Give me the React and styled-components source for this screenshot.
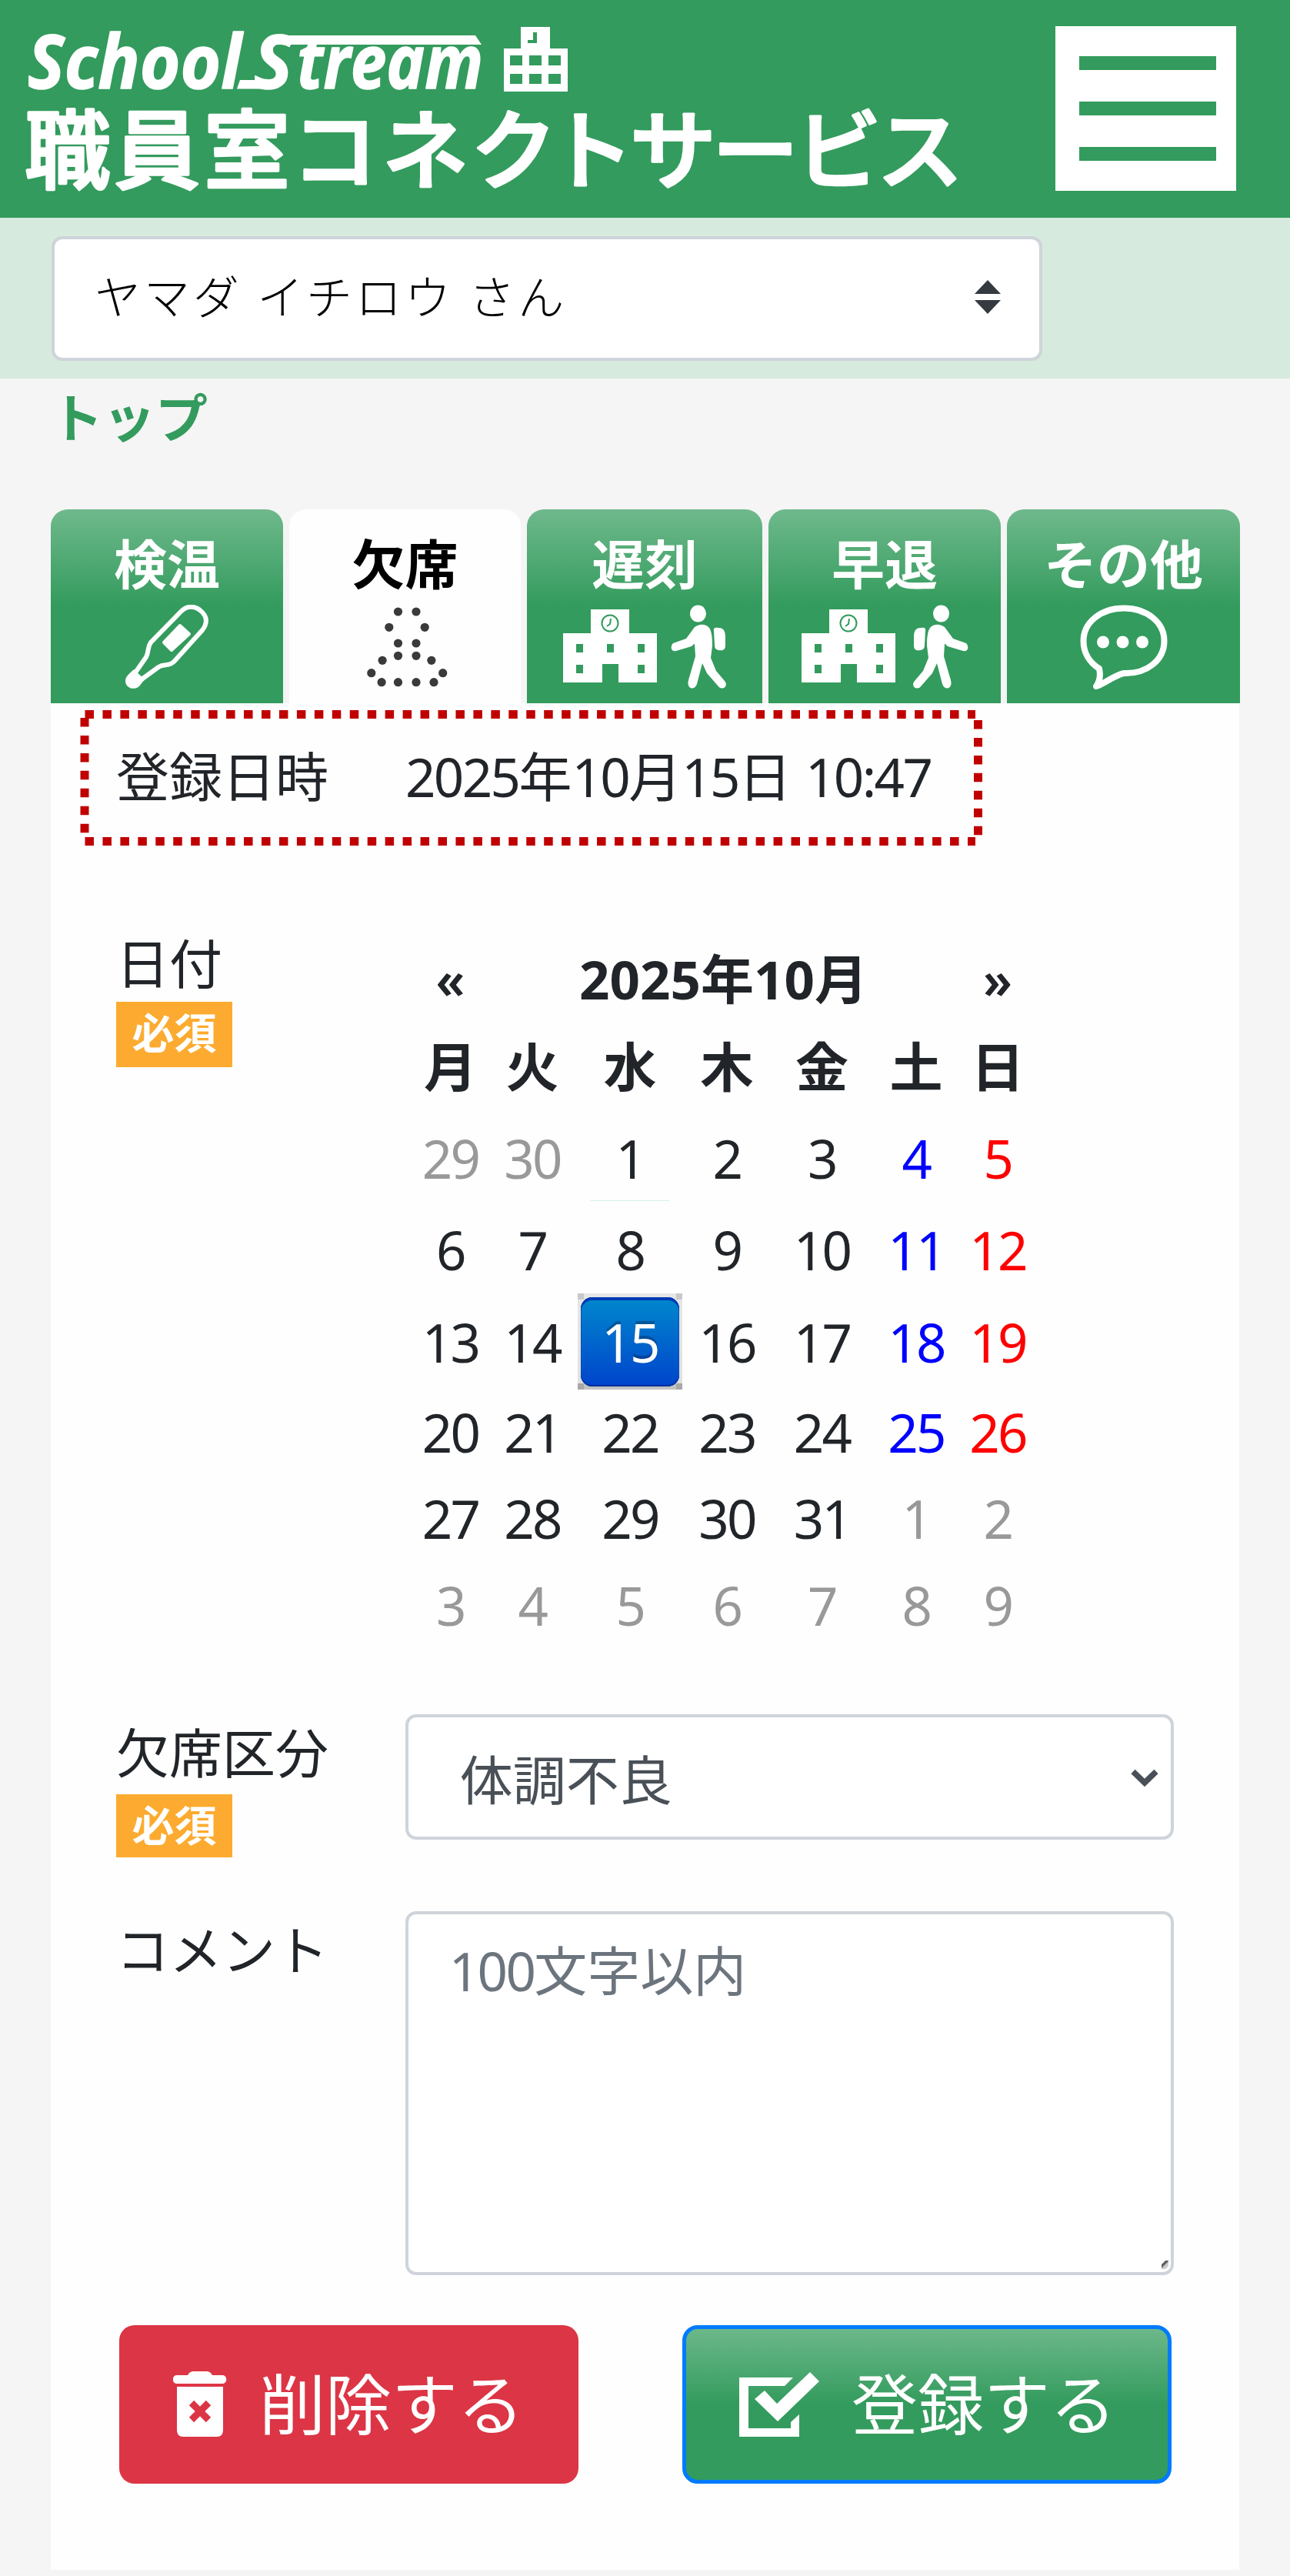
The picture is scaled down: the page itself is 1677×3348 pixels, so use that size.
import React from 'react';
import styled, { createGlobalStyle, css } from 'styled-components';

const green = '#339b5d';
const fade = 'linear-gradient(to bottom, #6fb98c 0%, #339b5d 50%, #339b5d 100%)';

const GlobalStyle = createGlobalStyle`
  * {
    box-sizing: border-box;
  }
  body {
    margin: 0;
    background: #f5f5f5;
    color: #212529;
    font-family: 'Noto Sans', 'Noto Sans CJK JP', sans-serif;
    font-size: 69px;
    line-height: 90px;
  }
`;

const Page = styled.div`
  display: flex;
  flex-direction: column;
  height: 3348px;
  overflow: hidden;
`;

const Header = styled.header`
  display: flex;
  justify-content: space-between;
  align-items: flex-start;
  height: 283px;
  padding-right: 70px;
  background: ${green};
`;

const MenuButton = styled.button`
  display: flex;
  flex-direction: column;
  gap: 41px;
  width: 235px;
  height: 214px;
  margin-top: 34px;
  padding: 39px 26px 0 31px;
  border: 0;
  background: #fff;
`;

const MenuBar = styled.span`
  height: 18px;
  background: ${green};
`;

const UserBar = styled.div`
  height: 209px;
  padding: 24px 67px;
  background: #d7eade;
`;

const UserSelect = styled.div`
  display: flex;
  align-items: center;
  justify-content: space-between;
  width: 1288px;
  height: 162px;
  padding: 0 50px 4px 52px;
  border: 4px solid #ced4da;
  border-radius: 14px;
  background: #fff;
  color: #000;
  font-size: 60px;
  font-weight: 300;
  letter-spacing: 3.9px;
`;

const Crumb = styled.a`
  display: block;
  height: 170px;
  padding: 6px 0 0 66px;
  color: ${green};
  font-size: 68px;
  font-weight: 700;
`;

const Tabs = styled.nav`
  display: grid;
  grid-template-columns: 302px 301px 306px 302px 303px;
  column-gap: 8px;
  height: 252px;
  margin-left: 66px;
`;

const Tab = styled.a`
  display: flex;
  flex-direction: column;
  align-items: center;
  padding-top: 26px;
  border-radius: 22px 22px 0 0;
  background: ${fade};
  color: #fff;
  font-weight: 700;
  ${({ $active }) => $active && css`
    background: #fefefe;
    color: #000;
  `}
`;

const TabLabel = styled.span`
  height: 98px;
`;

const TabIcon = styled.span`
  display: flex;
  gap: ${({ $gap }) => $gap || 0}px;
  height: 110px;
`;

const Panel = styled.main`
  width: 1545px;
  height: 2426px;
  margin-left: 66px;
  padding: 9px 85px 0 38px;
  background: #fefefe;
`;

const Registered = styled.div`
  position: relative;
  display: flex;
  width: 1173px;
  height: 176px;
  padding: 41px 0 0 47px;
`;

const Frame = styled.svg`
  position: absolute;
  inset: 0;
`;

const Label = styled.div`
  width: 376px;
`;

const Row = styled.div`
  display: flex;
  padding-left: 47px;
  height: ${({ $height }) => $height}px;
`;

const Caption = styled.div`
  padding-top: ${({ $top }) => $top}px;
`;

const Badge = styled.span`
  display: block;
  width: 151px;
  height: ${({ $height }) => $height}px;
  margin-top: ${({ $top }) => $top}px;
  background: #fcab30;
  color: #fff;
  font-size: 55px;
  font-weight: 700;
  line-height: 80px;
  text-align: center;
`;

const Digits = styled.span`
  letter-spacing: -2.6px;
`;

const Calendar = styled.div`
  display: grid;
  grid-template-columns: 107px 106px 148px 104px 143px 102px 110px;
  grid-template-rows: 112px 115px 127px 111px 130px 103px 122px 104px;
  margin: 117px 0 0 5px;
`;

const tones = {
  muted: '#999',
  sat: '#00f',
  sun: '#f00',
};

const Day = styled.div`
  display: flex;
  align-items: center;
  justify-content: center;
  padding-bottom: 4px;
  color: ${({ $tone }) => tones[$tone] || '#212529'};
  ${({ $line }) => $line && css`
    background: linear-gradient(#d5f3e2, #d5f3e2) 22px 117px / 103px 1px no-repeat;
  `}
`;

const Head = styled(Day)`
  grid-column: span ${({ $span }) => $span || 1};
  padding-bottom: 0;
  font-weight: 700;
`;

const Arrow = styled(Head)`
  font-size: 66px;
  font-weight: 600;
`;

const Selected = styled.div`
  align-self: start;
  justify-self: center;
  width: 136px;
  height: 125px;
  padding: 5px 4px;
  background:
    linear-gradient(#c9c9c9, #c9c9c9) 0 0 / 8px 8px no-repeat,
    linear-gradient(#c9c9c9, #c9c9c9) 100% 0 / 8px 8px no-repeat,
    linear-gradient(#a8a8a8, #a8a8a8) 0 100% / 8px 8px no-repeat,
    linear-gradient(#a8a8a8, #a8a8a8) 100% 100% / 8px 8px no-repeat,
    linear-gradient(#e6e6e6, #e0e0e0 93%, #c2c2c2 94%);
`;

const SelectedDay = styled.div`
  height: 116px;
  border-radius: 15px;
  background: linear-gradient(#0088cc, #0044cc);
  box-shadow: inset 0 4px 0 #0038b4, inset 0 -2px 1px #0a2f9c, inset 0 0 0 1px #0a56b8;
  color: #fff;
  line-height: 117px;
  text-align: center;
  text-shadow: 0 -4px 0 rgba(0, 0, 0, 0.25);
`;

const Field = styled.div`
  display: flex;
  justify-content: space-between;
  width: 1000px;
  height: ${({ $height }) => $height}px;
  padding: ${({ $pad }) => $pad};
  border: 4px solid #ced4da;
  border-radius: 14px;
  background: #fff;
  color: ${({ $color }) => $color};
`;

const Comment = styled(Field)`
  background: linear-gradient(135deg, transparent 22%, #555 30%, #777 48%, #ccc 55%, #ccc 78%, transparent 85%) calc(100% - 3px) calc(100% - 4px) / 9px 11px no-repeat #fff;
`;

const Actions = styled.div`
  display: flex;
  justify-content: space-between;
  padding: 0 3px 0 51px;
`;

const Button = styled.button`
  display: flex;
  align-items: center;
  width: ${({ $width }) => $width}px;
  height: 206px;
  padding: 0 0 0 ${({ $left }) => $left}px;
  gap: 42px;
  border: ${({ $outline }) => ($outline ? '5px solid #007bff' : '0')};
  border-radius: 20px;
  background: ${({ $fill }) => $fill};
  background-origin: border-box;
  color: #fff;
  font-family: inherit;
  font-size: 86px;
  line-height: 120px;
`;

const Logo = () => (
  <svg width="1270" height="275" viewBox="0 0 1270 275" fill="#fff" stroke="#fff" strokeLinejoin="round">
    <g
      fontFamily="'Open Sans', 'Noto Sans', sans-serif"
      fontStyle="italic"
      fontWeight="700"
      fontSize="96"
      strokeWidth="1.5"
    >
      <text x="36" y="115" textLength="278" lengthAdjust="spacingAndGlyphs">School</text>
      <text x="330" y="115" textLength="50" lengthAdjust="spacingAndGlyphs">S</text>
      <text x="386" y="115" textLength="242" lengthAdjust="spacingAndGlyphs">tream</text>
    </g>
    <g stroke="none">
      <path d="M358 46H618L626 58H350z" />
      <path d="M312 104H352V115.500H308z" />
      <path fillRule="evenodd" d="M677 35H715V63H738V119H655V63H677zM663 72V85H679V72zM688 72V85H704V72zM713 72V85H729V72zM663 96V109H679V96zM688 96V109H704V96zM713 96V109H729V96zM693 42V52H686V56H698V42z" />
    </g>
    <text
      x="32 148 265 379 497 612 712 819 926 1034 1140"
      y="237"
      fontFamily="'Noto Sans CJK JP', sans-serif"
      fontWeight="500"
      fontSize="112"
      strokeWidth="3.5"
    >
      職員室コネクトサービス
    </text>
  </svg>
);

const Sorter = () => (
  <svg width="34" height="44" viewBox="0 0 34 44" fill="#343a40">
    <path d="M17 0L34 18H0zM0 26H34L17 44z" />
  </svg>
);

const Thermometer = () => (
  <svg width="110" height="110" viewBox="0 0 110 110" fill="none" stroke="#fff" strokeWidth="6">
    <path d="M14 88L28 68C32 60 29 56 34 49L73 9C81 1 90 1 98 7C108 15 108 24 101 33L65 73C58 81 52 76 44 81L22 97" />
    <path d="M72 27L84 38L61 59L51 49z" fill="#fff" strokeWidth="4" strokeLinejoin="round" />
    <path d="M12 84L26 97L19 106C12 112 1 108 1 99C1 93 6 90 12 84z" fill="#fff" stroke="none" />
  </svg>
);

const dots = [
  [517, 795], [540.5, 795], [505.3, 815.3], [551.7, 815.3], [517, 836], [540.5, 836],
  [517, 852.3], [540.5, 852.3], [496.6, 858.3], [560.4, 858.3], [482.3, 874.7], [575.2, 874.7],
  [495.6, 886.7], [517, 886.7], [540.5, 886.7], [563.5, 886.7],
];

const AbsentPerson = () => (
  <svg width="110" height="110" viewBox="471.5 786 110 110" fill="#3a3a3a">
    {dots.map(([x, y]) => <circle key={`${x}-${y}`} cx={x} cy={y} r="5.6" />)}
  </svg>
);

const School = () => (
  <svg width="122" height="110" viewBox="0 0 122 110" fill="#fff">
    <path fillRule="evenodd" d="M36 6H86V37H122V101H72V77H51V101H0V37H36zM17 51V62H26V51zM57 51V62H66V51zM97 51V62H106V51zM17 78V89H26V78zM97 78V89H106V78z" />
    <circle cx="61" cy="24" r="10.5" fill="none" stroke={green} strokeWidth="2" />
    <path d="M62 18L61 25L57 28" fill="none" stroke={green} strokeWidth="2" />
  </svg>
);

const Walker = styled(({ className }) => (
  <svg className={className} width="73" height="110" viewBox="0 0 73 110" fill="#fff">
    <ellipse cx="35.5" cy="11.5" rx="10.5" ry="11" />
    <path d="M3 50C-1 54 0 62 7 60L27 54C30 52 30 50 31 51L32 67L23 98C20 110 31 112 34 103L41 76L47 89L61 105C66 113 76 106 70 99L59 86L52 69L54 53C54 42 53 34 50 30C45 24 36 25 31 29L20 44z" />
    <path d="M56 34C55 30 58 29 62 30C70 30 71 36 71 43V53C71 59 67 60 62 59C58 58 57 56 57 52z" />
  </svg>
))`
  transform: ${({ $flip }) => ($flip ? 'scaleX(-1)' : 'none')};
`;

const Bubble = () => (
  <svg width="114" height="110" viewBox="0 0 114 110" fill="none" stroke="#fff" strokeWidth="8">
    <path d="M25 83C12 75 4.500 62 4.500 47C4.500 23 27 4.500 57 4.500C87 4.500 109.500 23 109.500 47C109.500 72 87 90 57 89C44 92 33 102 21 106C26 99 27 92 25 83z" strokeLinejoin="round" />
    <g fill="#fff" stroke="none">
      <circle cx="30" cy="48.500" r="8" />
      <circle cx="55.500" cy="48.500" r="8" />
      <circle cx="81" cy="48.500" r="8" />
    </g>
  </svg>
);

const Chevron = () => (
  <svg width="38" height="90" viewBox="-1 -31 38 90" fill="none" stroke="#495057" strokeWidth="7.500">
    <path d="M3 3.500L18 18L33 3.500" />
  </svg>
);

const Trash = () => (
  <svg width="70" height="86" viewBox="0 0 70 86" fill="#fff">
    <path d="M19 5C21 1 24 0 27 0H43C46 0 49 1 51 5H64C71 5 71 16 64 16H5C-2 16 -2 5 5 5z" />
    <path d="M5 20H65V76C65 82 62 85 57 85H13C8 85 5 82 5 76z" />
    <path d="M24 41L46 63M46 41L24 63" stroke="#dc3545" strokeWidth="9" />
  </svg>
);

const CheckBox = () => (
  <svg width="104" height="85" viewBox="0 0 104 85" fill="#fff">
    <path d="M0 7H70L59 18H12V73H67V65L78 55V84H0z" />
    <path d="M33 24L49 41L92 0L104 12L50 64L20 35z" />
  </svg>
);

const tabs = [
  { label: '検温', icon: <Thermometer /> },
  { label: '欠席', icon: <AbsentPerson />, active: true },
  { label: '遅刻', icon: <><School /><Walker /></>, gap: 18 },
  { label: '早退', icon: <><School /><Walker $flip /></>, gap: 22 },
  { label: 'その他', icon: <Bubble /> },
];

const weekdays = ['月', '火', '水', '木', '金', '土', '日'];

const weeks = [
  [29, 30, 1, 2, 3, 4, 5],
  [6, 7, 8, 9, 10, 11, 12],
  [13, 14, 15, 16, 17, 18, 19],
  [20, 21, 22, 23, 24, 25, 26],
  [27, 28, 29, 30, 31, 1, 2],
  [3, 4, 5, 6, 7, 8, 9],
];

const toneOf = (day, week, col) => {
  if ((week === 0 && day > 20) || (week > 3 && day < 10)) return 'muted';
  if (col === 5) return 'sat';
  if (col === 6) return 'sun';
  return 'day';
};

const Month = () => (
  <Calendar>
    <Arrow>«</Arrow>
    <Head $span={5}>2025年10月</Head>
    <Arrow>»</Arrow>
    {weekdays.map((name) => <Head key={name}>{name}</Head>)}
    {weeks.map((week, w) => week.map((day, col) => (
      w === 2 && day === 15 ? (
        <Selected key={day}>
          <SelectedDay><Digits>15</Digits></SelectedDay>
        </Selected>
      ) : (
        <Day key={`${w}-${day}`} $tone={toneOf(day, w, col)} $line={w === 0 && day === 1}>
          <Digits>{day}</Digits>
        </Day>
      )
    )))}
  </Calendar>
);

const App = () => {
  return (
    <Page>
      <GlobalStyle />
      <Header>
        <Logo />
        <MenuButton>
          <MenuBar />
          <MenuBar />
          <MenuBar />
        </MenuButton>
      </Header>
      <UserBar>
        <UserSelect>
          ヤマダ イチロウ さん
          <Sorter />
        </UserSelect>
      </UserBar>
      <Crumb>トップ</Crumb>
      <Tabs>
        {tabs.map((tab) => (
          <Tab key={tab.label} $active={tab.active}>
            <TabLabel>{tab.label}</TabLabel>
            <TabIcon $gap={tab.gap}>{tab.icon}</TabIcon>
          </Tab>
        ))}
      </Tabs>
      <Panel>
        <Registered>
          <Frame width="1173" height="176" stroke="#c00000" strokeWidth="11" strokeDasharray="11.5 11.45">
            <path d="M6.500 5.500H1164M6.500 170.500H1164" />
            <path d="M6 10V160M1167.500 13V163" />
          </Frame>
          <Label>登録日時</Label>
          <div>
            <Digits>2025</Digits>年<Digits>10</Digits>月<Digits>15</Digits>日 <Digits>10:47</Digits>
          </div>
        </Registered>
        <Row $height={1129}>
          <Label>
            <Caption $top={108}>日付</Caption>
            <Badge $height={85} $top={5}>必須</Badge>
          </Label>
          <Month />
        </Row>
        <Row $height={256}>
          <Label>
            <Caption $top={5}>欠席区分</Caption>
            <Badge $height={82} $top={9}>必須</Badge>
          </Label>
          <Field $height={163} $pad="36px 15px 0 67px" $color="#495057">
            体調不良
            <Chevron />
          </Field>
        </Row>
        <Row $height={538}>
          <Label>
            <Caption $top={5}>コメント</Caption>
          </Label>
          <Comment $height={473} $pad="28px 53px" $color="#6c757d">
            <div><Digits>100</Digits>文字以内</div>
          </Comment>
        </Row>
        <Actions>
          <Button $width={597} $left={70} $fill="#dc3545">
            <Trash />
            削除する
          </Button>
          <Button $width={636} $left={69} $fill={fade} $outline>
            <CheckBox />
            登録する
          </Button>
        </Actions>
      </Panel>
    </Page>
  );
};

export default App;
